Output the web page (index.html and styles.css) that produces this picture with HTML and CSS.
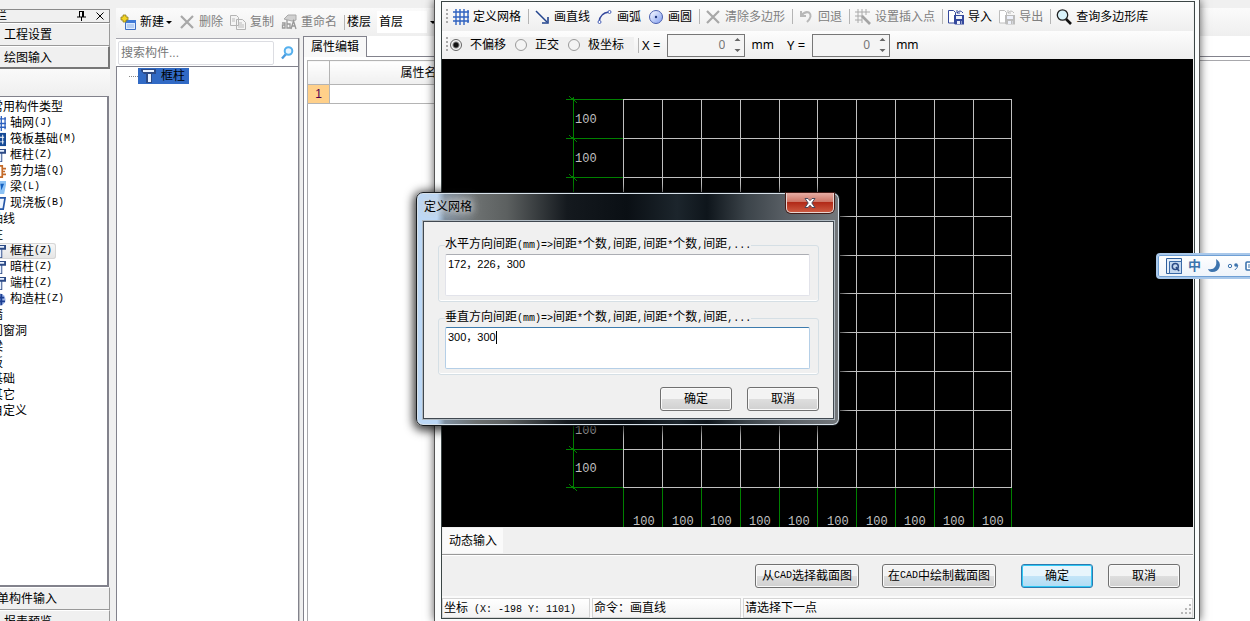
FILE: index.html
```html
<!DOCTYPE html>
<html lang="zh-CN">
<head>
<meta charset="utf-8">
<title>定义网格</title>
<link rel="stylesheet" href="styles.css">
</head>
<body>
<svg class="defs" width="0" height="0" aria-hidden="true">
  <defs>
    <linearGradient id="ball" x1="0" y1="0" x2="1" y2="1"><stop offset="0" stop-color="#fff"/><stop offset="1" stop-color="#7f9cf0"/></linearGradient>
    <symbol id="i-column" viewBox="0 0 16 16"><path d="M1 1h15v5h-4v9H6V6H4L1 3z" fill="#2c4a86"/><path d="M3 2h11v2H3zM8 6h3v8H8z" fill="#e8f1ff"/></symbol>
    <symbol id="i-grid" viewBox="0 0 16 16"><path d="M3 0v16M7 0v16M11 0v16M15 1v13M0 3h16M0 8h16M0 12h16" stroke="#2f62c0" stroke-width="1.4" fill="none"/></symbol>
    <symbol id="i-cross" viewBox="0 0 16 16"><path d="M2 2l12 12M14 2L2 14" stroke="#a8a8a8" stroke-width="2.2" fill="none"/></symbol>
    <symbol id="i-disk" viewBox="0 0 16 16"><path d="M.5 1.500h5l2 2V14h-7z" fill="#fff" stroke="currentColor"/><path d="M6 6h10v9.500H7L6 14.500z" fill="currentColor"/><path d="M8 7h6v3H8zM9 12h4.500v3H9z" fill="#eef1fb"/><path d="M12 12h1v3h-1z" fill="currentColor"/><path d="M9 1v3h3M9 4q3-4 6 0" fill="none" stroke="currentColor"/></symbol>
  </defs>
</svg>
<div class="desktop">
  <aside class="sidebar">
    <div class="pane-title"><span>栏</span>
      <button class="plain" aria-label="固定"><svg width="9" height="10" viewBox="0 0 9 10"><path d="M2.500 0v6M2 .5h4.500M6 0v6M0 6h9M4.500 6v4" stroke="#000" fill="none"/><path d="M5 0h2v6H5z"/></svg></button>
      <button class="plain" aria-label="关闭"><svg width="8" height="8" viewBox="0 0 8 8"><path d="M.5.5l7 7M7.500.5l-7 7" stroke="#000"/></svg></button>
    </div>
    <button class="nav">工程设置</button>
    <button class="nav active">绘图输入</button>
    <div class="side-tools"></div>
    <ul class="tree">
      <li>常用构件类型</li>
      <li class="kid"><svg><use href="#i-grid"/></svg>轴网<i>(J)</i></li>
      <li class="kid"><svg viewBox="0 0 16 16"><path d="M0 1h16v14H0z" fill="#164a96"/><path d="M8 3h1v10H8zM12 3h1v10h-1zM2 5h12v1H2zM2 10h12v1H2z" fill="#fff"/></svg>筏板基础<i>(M)</i></li>
      <li class="kid"><svg><use href="#i-column"/></svg>框柱<i>(Z)</i></li>
      <li class="kid"><svg viewBox="0 0 16 16"><path d="M3 2h9v12H3M12 5h4M12 11h4M12 8h3" fill="none" stroke="#c46a28" stroke-width="1.800"/></svg>剪力墙<i>(Q)</i></li>
      <li class="kid"><svg viewBox="0 0 16 16"><path d="M2 1h14v4l-2 10H9l1-9H2z" fill="#8cc2f5"/><path d="M10 4h4l-3 7z" fill="#1460c0"/></svg>梁<i>(L)</i></li>
      <li class="kid"><svg viewBox="0 0 16 16"><path d="M2 2h13l-2 12H2z" fill="#eef5ff" stroke="#2456a8" stroke-width="1.800"/></svg>现浇板<i>(B)</i></li>
      <li>轴线</li>
      <li>柱</li>
      <li class="kid chosen"><svg><use href="#i-column"/></svg>框柱<i>(Z)</i></li>
      <li class="kid"><svg><use href="#i-column"/></svg>暗柱<i>(Z)</i></li>
      <li class="kid"><svg><use href="#i-column"/></svg>端柱<i>(Z)</i></li>
      <li class="kid"><svg viewBox="0 0 16 16"><circle cx="9" cy="8" r="6.500" fill="#9db6e8"/><path d="M11 2v12M5 6h9M6 10h9" stroke="#1d3f92" stroke-width="2"/></svg>构造柱<i>(Z)</i></li>
      <li>墙</li>
      <li>门窗洞</li>
      <li>梁</li>
      <li>板</li>
      <li>基础</li>
      <li>其它</li>
      <li>自定义</li>
    </ul>
    <button class="nav cut">单构件输入</button>
    <button class="nav">报表预览</button>
  </aside>

  <main class="work">
    <div class="main-tools">
      <button class="tool"><svg viewBox="0 0 16 16"><path d="M5.500 6.500h10v9h-10z" fill="#dcebff" stroke="#3c6ec4"/><path d="M5 6h11v3H5z" fill="#3f7ad8"/><path d="M7 11h7M7 13h7" stroke="#8fb2ea"/><path d="M3 1h3v2h2v3H6v2H3V6H1V3h2z" fill="#f3d425" stroke="#8d7b1c" stroke-width=".8"/></svg>新建<b class="caret"></b></button>
      <button class="tool off"><svg><use href="#i-cross"/></svg>删除</button>
      <button class="tool off"><svg viewBox="0 0 16 16"><path d="M.5 1.500h6l2 2v8h-8zM6.500 5.500h6l3 3v7h-9z" fill="#f4f4f4" stroke="#b4b4b4"/><path d="M8 9h4M8 11h6M8 13h6M2 5h3M2 7h3" stroke="#bbb"/></svg>复制</button>
      <button class="tool off"><svg viewBox="0 0 16 16"><path d="M3 5l4-4h8v5l-4 1z" fill="#d0d0d0" stroke="#aaa"/><path d="M1 9h3v5H1.500v-3H4M6 6v8h3v-4H6M10 15l2.500-8 2.500 8M11 12h3" fill="none" stroke="#999" stroke-width="1.300"/></svg>重命名</button>
      <span class="sep"></span>
      <label class="floor" for="floor">楼层</label>
      <select id="floor" class="floor-select"><option>首层</option></select>
      <b class="caret"></b>
    </div>
    <div class="panes">
      <section class="components">
        <div class="search">
          <input type="text" aria-label="搜索构件" placeholder="搜索构件...">
          <button class="plain" aria-label="搜索"><svg width="14" height="14" viewBox="0 0 14 14"><path d="M6 8l-4 4.500" stroke="#4a9ade" stroke-width="2.400"/><circle cx="8.500" cy="5" r="3.800" fill="#eaf6ff" stroke="#55b0ee" stroke-width="2"/></svg></button>
        </div>
        <div class="component-list"><span class="twig"></span><span class="picked"><svg width="16" height="16"><use href="#i-column"/></svg>框柱</span></div>
      </section>
      <section class="properties">
        <div class="tabs"><button class="tab">属性编辑</button><span class="tab-line"></span></div>
        <div class="sheet">
          <table>
            <tr><th class="num"></th><th>属性名称</th></tr>
            <tr><td class="num one">1</td><td></td></tr>
          </table>
        </div>
      </section>
    </div>
  </main>

  <section class="editor">
    <div class="editor-client">
      <div class="bar">
        <span class="grip"></span>
        <button class="tool"><svg><use href="#i-grid"/></svg>定义网格</button>
        <span class="sep"></span>
        <button class="tool"><svg viewBox="0 0 16 16"><path d="M2 2l11 11" stroke="#23458e" stroke-width="1.500"/><path d="M14 8v6H8" fill="none" stroke="#23458e" stroke-width="1.600"/></svg>画直线</button>
        <button class="tool"><svg viewBox="0 0 16 16"><path d="M2 13Q3 4 12 3" fill="none" stroke="#34489c" stroke-width="1.400"/><circle cx="2.500" cy="13" r="1.500" fill="#fff" stroke="#4a62b8"/><circle cx="12.500" cy="3" r="1.500" fill="#fff" stroke="#4a62b8"/></svg>画弧</button>
        <button class="tool"><svg viewBox="0 0 16 16"><circle cx="8" cy="8" r="6.500" fill="url(#ball)" stroke="#4a5fae"/><circle cx="8" cy="8" r="1.200" fill="#23397e"/></svg>画圆</button>
        <span class="sep"></span>
        <button class="tool off"><svg><use href="#i-cross"/></svg>清除多边形</button>
        <span class="sep"></span>
        <button class="tool off"><svg viewBox="0 0 16 16"><path d="M3 2v5h5M3.500 6.500Q7 2 11 3.500 15 7 9 13" fill="none" stroke="#b8b8b8" stroke-width="2"/></svg>回退</button>
        <span class="sep"></span>
        <button class="tool off"><svg viewBox="0 0 16 16"><path d="M3 0v14M7 0v14M11 0v6M0 3h15M0 7h8M0 11h7" stroke="#aaa"/><path d="M7 7l8 8" stroke="#a4a4a4" stroke-width="2.600"/></svg>设置插入点</button>
        <span class="sep"></span>
        <button class="tool"><svg class="ink"><use href="#i-disk"/></svg>导入</button>
        <button class="tool off"><svg class="dim"><use href="#i-disk"/></svg>导出</button>
        <span class="sep"></span>
        <button class="tool"><svg viewBox="0 0 16 16"><path d="M10 10l5 5" stroke="#111" stroke-width="2.600"/><circle cx="6.500" cy="6" r="5.200" fill="#d9f3fb" stroke="#222" stroke-width="1.300"/></svg>查询多边形库</button>
      </div>
      <div class="bar">
        <span class="grip"></span>
        <div class="modes">
          <label><input type="radio" name="mode" checked>不偏移</label>
          <label><input type="radio" name="mode">正交</label>
          <label><input type="radio" name="mode">极坐标</label>
        </div>
        <span class="sep"></span>
        <label class="axis" for="ox">X =</label>
        <span class="spin"><input id="ox" type="text" value="0"><svg width="7" height="16" viewBox="0 0 7 16"><path d="M3.500 1l3 3h-6zM3.500 15l3-3h-6z" fill="#666"/></svg></span>
        <span class="unit">mm</span>
        <label class="axis" for="oy">Y =</label>
        <span class="spin"><input id="oy" type="text" value="0"><svg width="7" height="16" viewBox="0 0 7 16"><path d="M3.500 1l3 3h-6zM3.500 15l3-3h-6z" fill="#666"/></svg></span>
        <span class="unit">mm</span>
      </div>
      <div class="canvas">
        <svg width="751" height="468" viewBox="0 0 751 468" shape-rendering="crispEdges">
          <path stroke="#008000" fill="none" d="M131.500 38v392M124 40.500h57M124 79.500h57M124 118.500h57M124 390.500h57M124 428.500h57M127 37l8 7M127 76l8 7M127 115l8 7M127 387l8 7M127 425l8 7M181.500 429v39M220.500 429v39M259.500 429v39M298.500 429v39M337.500 429v39M375.500 429v39M414.500 429v39M453.500 429v39M492.500 429v39M531.500 429v39M569.500 429v39"/>
          <path stroke="#c0c0c0" fill="none" d="M181.500 40v389M220.500 40v389M259.500 40v389M298.500 40v389M337.500 40v389M375.500 40v389M414.500 40v389M453.500 40v389M492.500 40v389M531.500 40v389M569.500 40v389M181 40.500h389M181 79.500h389M181 118.500h389M181 157.500h389M181 196.500h389M181 234.500h389M181 273.500h389M181 312.500h389M181 351.500h389M181 390.500h389M181 428.500h389"/>
          <g class="dims">
            <text x="133" y="64">100</text><text x="133" y="103">100</text><text x="133" y="375">100</text><text x="133" y="413">100</text>
            <text x="191" y="466">100</text><text x="230" y="466">100</text><text x="268" y="466">100</text><text x="307" y="466">100</text><text x="346" y="466">100</text><text x="385" y="466">100</text><text x="424" y="466">100</text><text x="462" y="466">100</text><text x="501" y="466">100</text><text x="540" y="466">100</text>
          </g>
        </svg>
      </div>
      <div class="dynamic"><button class="tool">动态输入</button></div>
      <div class="actions">
        <button class="btn">从<i>CAD</i>选择截面图</button>
        <button class="btn second">在<i>CAD</i>中绘制截面图</button>
        <button class="btn wide primary">确定</button>
        <button class="btn wide">取消</button>
      </div>
      <div class="status">
        <span class="coords">坐标<i> (X: -198 Y: 1101)</i></span>
        <span class="command">命令：画直线</span>
        <span class="hint">请选择下一点<svg width="11" height="11" viewBox="0 0 11 11"><path d="M9 1h2v2H9zM5 5h2v2H5zM9 5h2v2H9zM1 9h2v2H1zM5 9h2v2H5zM9 9h2v2H9z" fill="#b8b8b8"/></svg></span>
      </div>
    </div>
  </section>

  <section class="dialog" role="dialog" aria-label="定义网格">
    <header><h1>定义网格</h1>
      <button class="close" aria-label="关闭"><svg width="12" height="10" viewBox="0 0 12 10"><path d="M1 .5h3l2 2.200 2-2.200h3L7.800 5 11 9.500H8L6 7.200 4 9.500H1L4.200 5z" fill="#fff" stroke="#4d4a5c"/></svg></button>
    </header>
    <div class="dialog-body">
      <fieldset>
        <legend>水平方向间距<i>(mm)=&gt;</i>间距<i>*</i>个数<i>,</i>间距<i>,</i>间距<i>*</i>个数<i>,</i>间距<i>,...</i></legend>
        <textarea aria-label="水平方向间距">172，226，300</textarea>
      </fieldset>
      <fieldset>
        <legend>垂直方向间距<i>(mm)=&gt;</i>间距<i>*</i>个数<i>,</i>间距<i>,</i>间距<i>*</i>个数<i>,</i>间距<i>,...</i></legend>
        <textarea class="focused" aria-label="垂直方向间距">300，300</textarea>
        <span class="beam"></span>
      </fieldset>
      <div class="dialog-actions"><button class="btn wide">确定</button><button class="btn wide">取消</button></div>
    </div>
  </section>

  <div class="ime">
    <svg width="16" height="16" viewBox="0 0 16 16"><path d="M.5.5h15v15H.5z" fill="#e4eefa" stroke="#2f5f9c"/><path d="M3.500 3.500h12v12h-12z" fill="#c4d8f0" stroke="#3a6aa8"/><circle cx="9.300" cy="8.500" r="3" fill="none" stroke="#2a4a86" stroke-width="1.500"/><path d="M10 9l3 4" stroke="#2a4a86" stroke-width="1.500"/></svg>
    <span>中</span>
    <svg width="14" height="14" viewBox="0 0 14 14"><path d="M9 0q5 3 3.500 8T5 13Q2 13 1 10q5 1 7-2t1-8z" fill="#3d74ae"/></svg>
    <svg width="12" height="10" viewBox="0 0 12 10"><circle cx="3" cy="5" r="1.700" fill="none" stroke="#3d74ae"/><circle cx="9" cy="4" r="1.800" fill="#3d74ae"/><path d="M10.800 4q0 3-3 5" stroke="#3d74ae" fill="none"/></svg>
    <svg width="14" height="10" viewBox="0 0 14 10"><rect x="1" y="1" width="13" height="8" rx="1" fill="#fff" stroke="#3d74ae" stroke-width="1.600"/><path d="M3 4h9M3 6h9" stroke="#3d74ae"/></svg>
  </div>
</div>
</body>
</html>
```
FILE: styles.css
```css
* { box-sizing: border-box; }
html, body { height: 100%; }
body {
  margin: 0;
  font: 12px/16px "Liberation Sans", "Noto Sans CJK SC", sans-serif;
  color: #000;
  background: #f0f0f0;
}
button, input, select, textarea { font: inherit; color: inherit; margin: 0; }
button { display: flex; align-items: center; padding: 0; border: 0; background: none; white-space: nowrap; }
i { font: 10px/16px "Liberation Mono", monospace; white-space: pre; }
svg { display: block; flex: none; }
.defs { position: absolute; }
.desktop { position: relative; display: flex; gap: 6px; height: 100vh; min-height: 600px; overflow: hidden; }

/* Left navigation; the last entry runs past the bottom edge */
.sidebar { flex: none; width: 110px; display: flex; flex-direction: column; margin-bottom: -12px; padding-top: 9px; overflow: hidden; }
.pane-title { display: flex; align-items: center; gap: 10px; height: 14px; padding-right: 5px; border: 1px solid #8a8a8a; border-left: 0; overflow: hidden; flex: none; }
.pane-title span { flex: 1; margin-left: -5px; }
.nav { flex: none; height: 23px; padding: 1px 0 0 4px; border-top: 1px solid #fff; border-bottom: 1px solid #999; border-right: 1px solid #999; }
.nav.active { border-bottom: 2px solid #777; border-right: 2px solid #777; }
.nav.cut { padding-left: 0; text-indent: -3px; }
.side-tools { flex: none; height: 27px; background: linear-gradient(#fafafa, #efefef); }
.tree { flex: 1; min-height: 0; margin: 0 1px 0 -9px; padding: 2px 0 0; list-style: none; background: #fff; border: solid #82828c; border-width: 1px 2px 2px 0; overflow: hidden; }
.tree li { height: 16px; white-space: nowrap; }
.tree .kid { display: flex; align-items: center; width: max-content; padding-right: 4px; }
.tree .kid svg { width: 15px; height: 15px; margin-right: 4px; }
.tree .chosen { border-radius: 3px; background: linear-gradient(#f8f8f8, #e4e4e4); box-shadow: inset 0 0 0 1px #d6d6d6; }

/* Main area */
.work { flex: 1; min-width: 0; display: flex; flex-direction: column; padding-top: 8px; }
.main-tools { flex: none; display: flex; align-items: center; gap: 1px; height: 28px; padding-left: 1px; background: linear-gradient(#fbfbfb, #efefef); }
.tool { height: 22px; gap: 4px; padding: 0 3px; }
.tool svg { width: 16px; height: 16px; }
.tool .caret { margin-left: -2px; }
.off { color: #808080; }
.ink { color: #34489c; }
.dim { color: #bdbdbd; }
.caret { width: 0; height: 0; border: 3px solid transparent; border-top-color: #000; border-bottom: 0; }
.sep { flex: none; width: 1px; height: 15px; margin: 0 1px 0 3px; background: #b4b4b4; }
.floor-select { appearance: none; width: 50px; height: 22px; margin: 0 2px 0 5px; padding: 0 2px; border: 0; border-radius: 0; background: #fff; }
.panes { flex: 1; min-height: 0; display: flex; gap: 4px; }
.components { flex: none; width: 183px; display: flex; flex-direction: column; margin-top: 2px; border-right: 1px solid #82828c; box-shadow: 1px 0 #c4c4c4; }
.search { flex: none; display: flex; align-items: center; gap: 6px; height: 28px; background: #fff; border-top: 1px solid #a6a6ae; padding: 2px; }
.search input { width: 156px; height: 24px; padding: 0 2px; border: 1px solid #dcdde2; border-radius: 2px; background: #fff; }
.search input::placeholder { color: #777; opacity: 1; }
.component-list { flex: 1; display: flex; align-items: flex-start; padding-top: 1px; background: #fff; border: solid #82828c; border-width: 1px 0 0 1px; }
.twig { width: 9px; margin: 8px 0 0 12px; border-top: 1px dotted #888; }
.picked { display: flex; align-items: center; gap: 5px; height: 16px; padding: 0 4px 0 2px; background: #316ac5; }
.properties { flex: 1; min-width: 0; display: flex; flex-direction: column; }
.tabs { flex: none; display: flex; align-items: stretch; height: 21px; background: #fff; }
.tab { width: 64px; justify-content: center; border: 1px solid #82828c; border-bottom: 0; background: #f8f8f8; }
.tab-line { flex: 1; border-bottom: 1px solid #82828c; }
.sheet { flex: 1; padding: 3px 0 0 3px; border-left: 1px solid #82828c; background: linear-gradient(#a8a8ac, #a8a8ac) 4px 3px / 100% 1px no-repeat, linear-gradient(#a8a8ac, #a8a8ac) 3px 3px / 1px 100% no-repeat, #fff; }
.sheet table { width: 213px; border-collapse: collapse; table-layout: fixed; }
.sheet th { height: 24px; padding: 0; font-weight: 400; border: 1px solid #b4b4b4; background: linear-gradient(#fff, #efefef); }
.sheet td { height: 19px; padding: 0; border: 1px solid #b4b4b4; text-align: center; }
.num { width: 22px; }
.sheet .one { background: #ffd08a; color: #500050; }

/* Section editor window */
.editor { position: absolute; top: 0; bottom: 0; left: 434px; right: 50px; padding: 1px 4px 2px 6px; border: solid #555; border-width: 0 1px; background: #fafcfc; box-shadow: 0 0 9px rgba(0, 0, 0, .65); }
.editor-client { display: flex; flex-direction: column; height: 100%; border: 1px solid #3c4646; background: #f0f0f0; padding-right: 1px; }
.bar { flex: none; display: flex; align-items: center; gap: 1px; height: 29px; padding-left: 4px; background: linear-gradient(#fdfdfd, #eee); }
.bar + .bar { height: 28px; }
.grip { width: 2px; height: 16px; margin-right: 1px; background: repeating-linear-gradient(#aaa 0 2px, transparent 2px 4px); }
.modes { display: flex; gap: 9px; padding-right: 10px; background: #f0f0f0; }
.modes label { display: flex; align-items: center; gap: 8px; }
.modes input { appearance: none; width: 12px; height: 12px; border: 1px solid #999; border-radius: 50%; background: #f4f4f4; }
.modes input:checked { border-color: #666; background: radial-gradient(#111 0 2px, #f4f4f4 4px); }
.axis, .unit { font: 13px/16px "Noto Sans", sans-serif; white-space: nowrap; }
.axis { padding: 0 6px 0 1px; }
.unit { padding: 0 11px 0 5px; font-size: 12px; }
.spin { display: flex; align-items: center; width: 78px; height: 23px; padding-right: 3px; border: 1px solid #777; background: #f4f4f4; }
.spin input { flex: 1; min-width: 0; padding: 0 9px 0 0; border: 0; background: none; color: #777; text-align: right; font: 12px/16px "Noto Sans", sans-serif; }
.canvas { flex: 1; min-height: 0; overflow: hidden; background: #000; }
.dims { font: 12px "Liberation Mono", monospace; fill: #c0c0c0; }
.dynamic { flex: none; display: flex; height: 28px; padding: 1px; border-bottom: 1px solid #999; }
.dynamic .tool { height: 25px; padding: 1px 6px 0; background: #fafafa; }
.actions { flex: none; display: flex; justify-content: flex-end; align-items: center; gap: 15px; height: 41px; padding-right: 13px; border-top: 1px solid #fff; }
.btn { height: 24px; justify-content: center; padding: 0 6px; border: 1px solid #707070; border-radius: 3px; background: linear-gradient(#f3f3f3 0 48%, #dedede 50%, #d0d0d0); box-shadow: inset 0 0 0 1px #fafafa; }
.wide { width: 72px; }
.second { margin: 0 10px 0 8px; padding: 0 5px; }
.primary { border-color: #2c7ab0; background: linear-gradient(#e8f5fc 0 48%, #c4e5f8 50%, #b0dcf4); box-shadow: inset 0 0 0 1px #30c8f4; }
.status { flex: none; display: flex; gap: 2px; height: 22px; border-top: 2px solid #fafafa; background: #fafafa; }
.status span { padding: 0 1px; line-height: 18px; border: 1px solid #d4d4d4; background: linear-gradient(#fff, #f2f2f2); white-space: nowrap; overflow: hidden; }
.status .coords { width: 148px; }
.status .command { width: 149px; }
.status .hint { flex: 1; display: flex; justify-content: space-between; align-items: center; }

/* Grid definition dialog */
.dialog { position: absolute; left: 416px; top: 192px; width: 424px; padding: 0 5px 6px 6px; border: 1px solid #15191d; border-radius: 7px; background: linear-gradient(90deg, #bcd8f6 0 20px, #8090a0 28px, #6c7070 60px, #5c6060 90px, #14191e 150px, #0a0f14 210px, #1c252c 260px, #0e151b 290px, #3c444a 330px, #5a6066 370px, #74787c); box-shadow: inset 0 0 0 1px #d8e2ea, 0 2px 10px 3px rgba(0, 0, 0, .75); }
.dialog header { display: flex; justify-content: space-between; align-items: flex-start; height: 28px; }
.dialog h1 { margin: 6px 0 0 1px; font: inherit; text-shadow: 0 0 8px #ddd, 0 0 8px #ddd, 0 0 12px #bbb; }
.close { width: 48px; height: 20px; justify-content: center; border: 1px solid #e9d5d1; border-top: 0; border-radius: 0 0 5px 5px; box-shadow: 0 0 0 1px #451c18; background: linear-gradient(#e7ada4, #cd7464 47%, #b22a18 50%, #cc5940); }
.dialog-body { padding: 15px 14px 7px; border: 1px solid #404850; box-shadow: 0 0 0 1px #b0bac2; background: #f0f0f0; }
fieldset { position: relative; min-width: 0; margin: 0 0 8px; padding: 1px 8px 5px 6px; border: 1px solid #d5dfe5; border-radius: 3px; box-shadow: inset 0 -1px #fff; }
legend { padding: 0; line-height: 14px; white-space: nowrap; }
legend i { line-height: 14px; }
textarea { display: block; width: 100%; height: 42px; padding: 1px 2px; border: 1px solid #e2e3ea; border-top-color: #abadb3; border-radius: 2px; outline: 0; resize: none; overflow: hidden; background: #fff; font-size: 11px; }
.focused { border-color: #b5cfe7; border-top-color: #3d7bad; }
/* Text insertion mark over the field */
.beam { position: absolute; left: 57px; top: 5px; width: 1px; height: 13px; background: #000; }
.dialog-actions { display: flex; justify-content: flex-end; gap: 15px; padding-top: 4px; }

/* Input method bar */
.ime { position: absolute; right: -12px; top: 253px; display: flex; align-items: center; gap: 6px; height: 26px; width: 106px; padding: 0 8px; border: 2px solid #a9c8ea; border-radius: 4px; box-shadow: inset 0 0 0 1px #6f9fd4; background: linear-gradient(#fff, #edf3fa); overflow: hidden; color: #3d74ae; }
.ime span { font-size: 13px; font-weight: 700; }
```
